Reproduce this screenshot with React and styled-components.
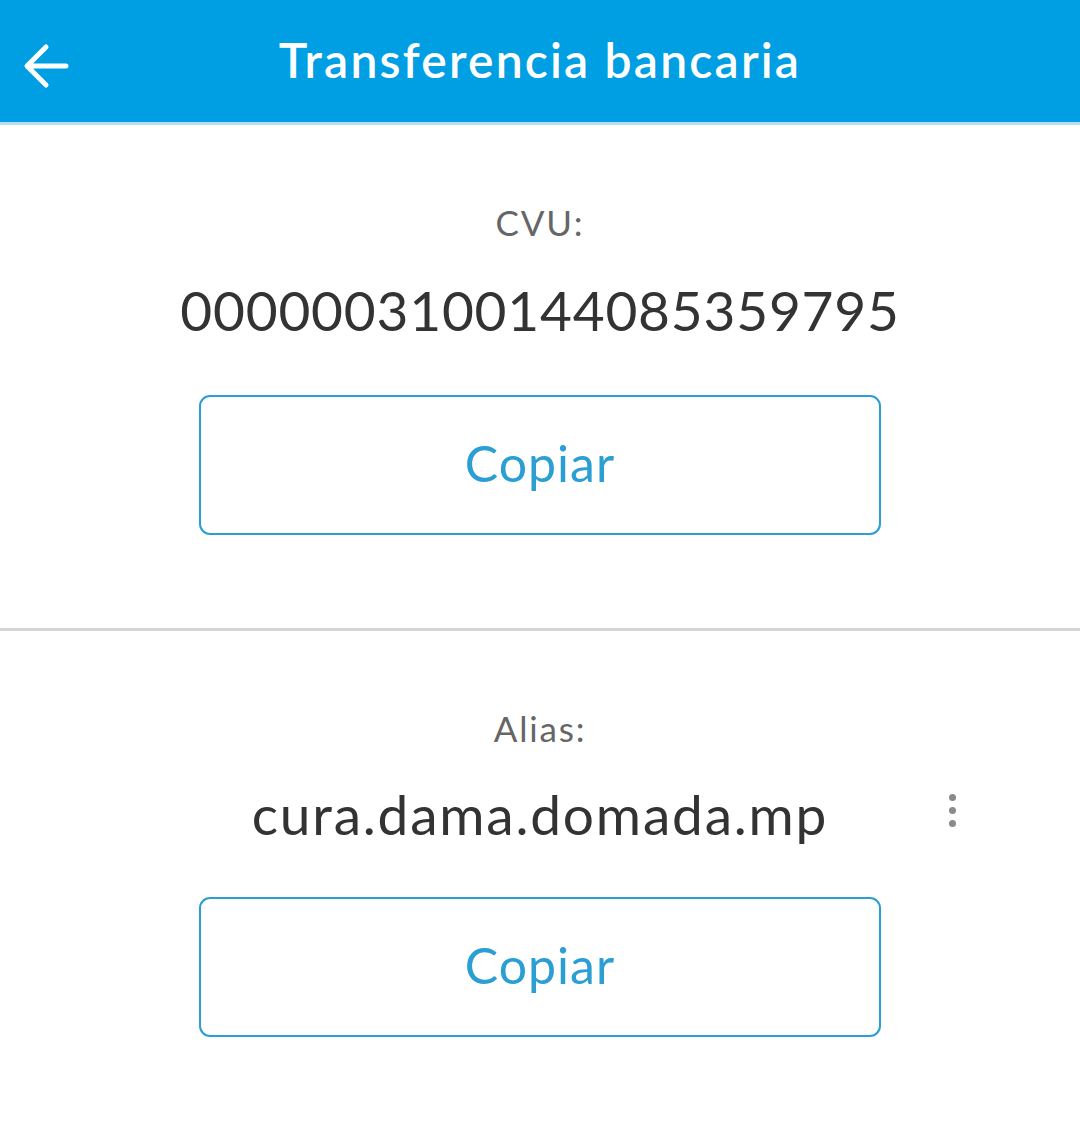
import React from "react";
import styled, { createGlobalStyle } from "styled-components";

const Global = createGlobalStyle`
  html, body { margin: 0; padding: 0; background: #fff; }
  body { font-family: Lato, "Open Sans", sans-serif; -webkit-font-smoothing: antialiased; }
`;

const Page = styled.div`
  width: 1080px;
  min-height: 1125px;
  background: #fff;
  display: flex;
  flex-direction: column;
`;

const Header = styled.header`
  height: 122px;
  background: #009ee3;
  border-bottom: 3px solid #b9dcef;
  display: grid;
  grid-template-columns: 120px 1fr 120px;
  align-items: center;
`;

const BackButton = styled.button`
  background: none;
  border: none;
  padding: 10px 0 0 22px;
  height: 100%;
  display: flex;
  align-items: center;
  cursor: pointer;
`;

const Title = styled.h1`
  margin: 0;
  text-align: center;
  color: #fff;
  font-family: Lato, "Open Sans", sans-serif;
  font-weight: 600;
  font-size: 48px;
  letter-spacing: 2.2px;
  line-height: 1;
  padding-bottom: 2px;
`;

const Section = styled.section`
  display: flex;
  flex-direction: column;
  align-items: center;
  padding: 77px 0 ${(p) => p.$bottom}px;
  border-bottom: ${(p) => (p.$divider ? "3px solid #d4d4d4" : "none")};
`;

const Label = styled.div`
  font-size: 35px;
  line-height: 40px;
  color: #666;
  letter-spacing: 1.8px;
`;

const ValueRow = styled.div`
  width: 100%;
  display: grid;
  grid-template-columns: 1fr auto 1fr;
  align-items: center;
  margin-top: ${(p) => p.$top}px;
`;

const Value = styled.div`
  grid-column: 2;
  font-size: 55px;
  line-height: 60px;
  color: #333;
  letter-spacing: ${(p) => p.$spacing}px;
`;

const MoreButton = styled.button`
  grid-column: 3;
  justify-self: end;
  margin-right: 110px;
  width: 36px;
  height: 50px;
  background: none;
  border: none;
  display: flex;
  flex-direction: column;
  align-items: center;
  justify-content: center;
  gap: 6px;
  padding: 0;
  margin-top: -8px;
`;

const Dot = styled.span`
  width: 7px;
  height: 7px;
  border-radius: 50%;
  background: #8a8a8a;
`;

const CopyButton = styled.button`
  margin-top: ${(p) => p.$top}px;
  width: 682px;
  height: 140px;
  box-sizing: border-box;
  border: 2.5px solid #2b9ed4;
  border-radius: 11px;
  background: #fff;
  color: #2b9ed4;
  font-family: Lato, "Open Sans", sans-serif;
  font-size: 50px;
  letter-spacing: 1px;
  cursor: pointer;
  padding: 0 0 4px;
`;

export default function App() {
  return (
    <Page>
      <Global />
      <Header>
        <BackButton aria-label="Volver">
          <svg width="48" height="48" viewBox="0 0 48 48" fill="none">
            <path
              d="M44 24H6M24 5L5 24l19 19"
              stroke="#fff"
              strokeWidth="5"
              strokeLinecap="round"
              strokeLinejoin="round"
            />
          </svg>
        </BackButton>
        <Title>Transferencia bancaria</Title>
        <div />
      </Header>
      <Section $divider $bottom={93}>
        <Label>CVU:</Label>
        <ValueRow $top={38}>
          <Value $spacing={0.8}>0000003100144085359795</Value>
        </ValueRow>
        <CopyButton $top={55}>Copiar</CopyButton>
      </Section>
      <Section $bottom={80}>
        <Label>Alias:</Label>
        <ValueRow $top={36}>
          <Value $spacing={1.8}>cura.dama.domada.mp</Value>
          <MoreButton aria-label="Más opciones">
            <Dot />
            <Dot />
            <Dot />
          </MoreButton>
        </ValueRow>
        <CopyButton $top={53}>Copiar</CopyButton>
      </Section>
    </Page>
  );
}
